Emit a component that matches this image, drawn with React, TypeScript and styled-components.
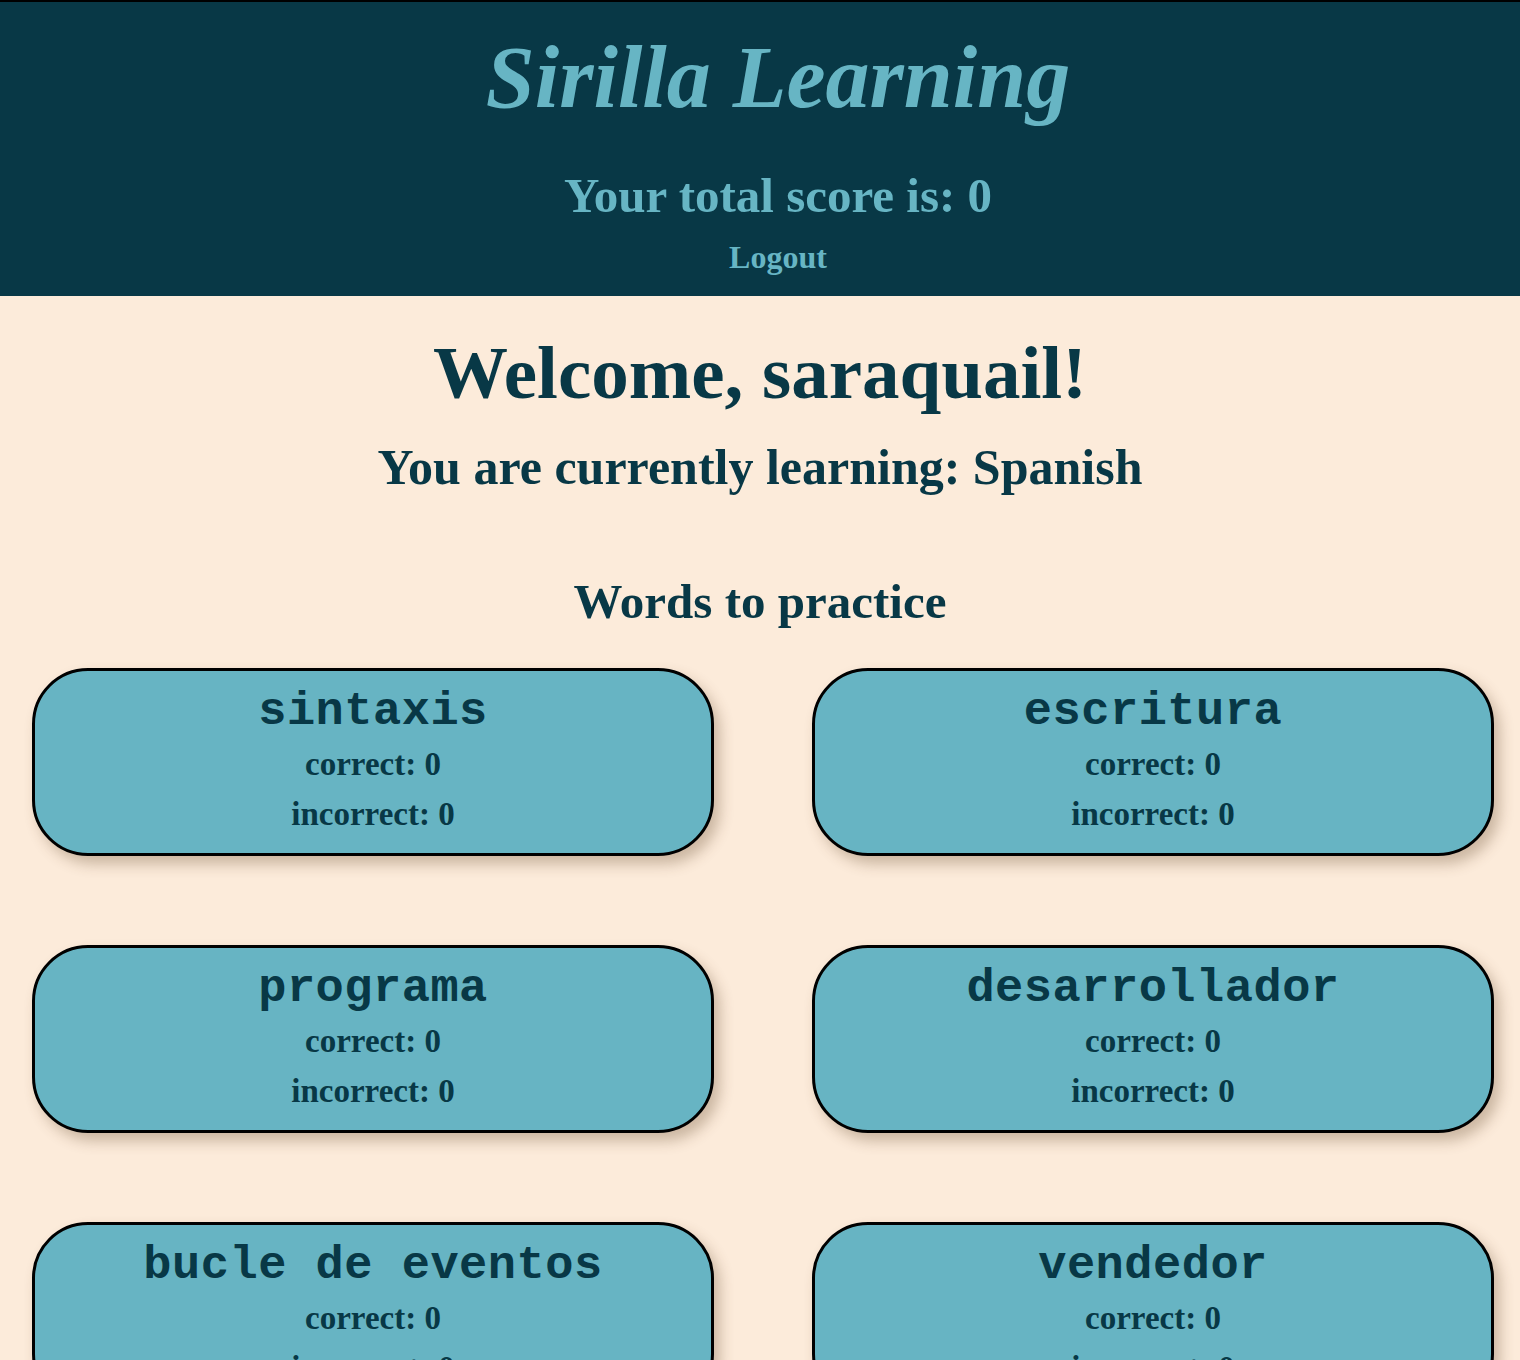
import React from "react";
import styled, { createGlobalStyle } from "styled-components";

const GlobalStyle = createGlobalStyle`
  html, body { margin: 0; padding: 0; }
  body {
    background: #fcebda;
    font-family: "Liberation Serif", "Times New Roman", serif;
    color: #083846;
  }
`;

const Header = styled.header`
  background: #083846;
  border-top: 2px solid #000;
  padding: 32px 0 23px 36px;
  display: flex;
  flex-direction: column;
  align-items: center;
  color: #67b5c4;
`;

const Title = styled.h1`
  margin: 0;
  font-size: 88px;
  line-height: 1;
  font-style: italic;
  font-weight: 700;
`;

const Score = styled.h2`
  margin: 49px 0 0;
  font-size: 49px;
  line-height: 1;
  font-weight: 700;
`;

const Logout = styled.a`
  margin-top: 21px;
  font-size: 32px;
  line-height: 1;
  font-weight: 700;
  color: #67b5c4;
  text-decoration: none;
  cursor: pointer;
`;

const Main = styled.main`
  padding: 39px 0 40px;
  display: flex;
  flex-direction: column;
  align-items: center;
`;

const Welcome = styled.h2`
  margin: 0;
  font-size: 75px;
  line-height: 1;
  font-weight: 700;
`;

const Learning = styled.h3`
  margin: 32px 0 0;
  font-size: 50px;
  line-height: 1;
  font-weight: 700;
`;

const SectionTitle = styled.h3`
  margin: 85px 0 0;
  font-size: 49px;
  line-height: 1;
  font-weight: 700;
`;

const Grid = styled.ul`
  list-style: none;
  margin: 42px 0 0;
  padding: 0 26px 0 32px;
  align-self: stretch;
  display: grid;
  grid-template-columns: 1fr 1fr;
  column-gap: 98px;
  row-gap: 89px;
`;

const Card = styled.li`
  background: #67b4c3;
  border: 3px solid #000;
  border-radius: 56px;
  box-shadow: 6px 8px 14px rgba(90, 60, 30, 0.3);
  padding: 17px 10px 14px;
  display: flex;
  flex-direction: column;
  align-items: center;
  color: #083846;
`;

const Word = styled.h4`
  margin: 0;
  font-family: "Liberation Mono", "Courier New", monospace;
  font-size: 47px;
  line-height: 1;
  letter-spacing: 0.5px;
  font-weight: 700;
  white-space: pre;
`;

const Stats = styled.div`
  margin-top: 4px;
  display: flex;
  flex-direction: column;
  align-items: center;
`;

const Stat = styled.p`
  margin: 0;
  font-size: 33px;
  line-height: 50px;
  font-weight: 700;
`;

const words = [
  "sintaxis",
  "escritura",
  "programa",
  "desarrollador",
  "bucle de eventos",
  "vendedor",
];

export default function App() {
  return (
    <>
      <GlobalStyle />
      <Header>
        <Title>Sirilla Learning</Title>
        <Score>Your total score is: 0</Score>
        <Logout>Logout</Logout>
      </Header>
      <Main>
        <Welcome>Welcome, saraquail!</Welcome>
        <Learning>You are currently learning: Spanish</Learning>
        <SectionTitle>Words to practice</SectionTitle>
        <Grid>
          {words.map((w) => (
            <Card key={w}>
              <Word>{w}</Word>
              <Stats>
                <Stat>correct: 0</Stat>
                <Stat>incorrect: 0</Stat>
              </Stats>
            </Card>
          ))}
        </Grid>
      </Main>
    </>
  );
}
